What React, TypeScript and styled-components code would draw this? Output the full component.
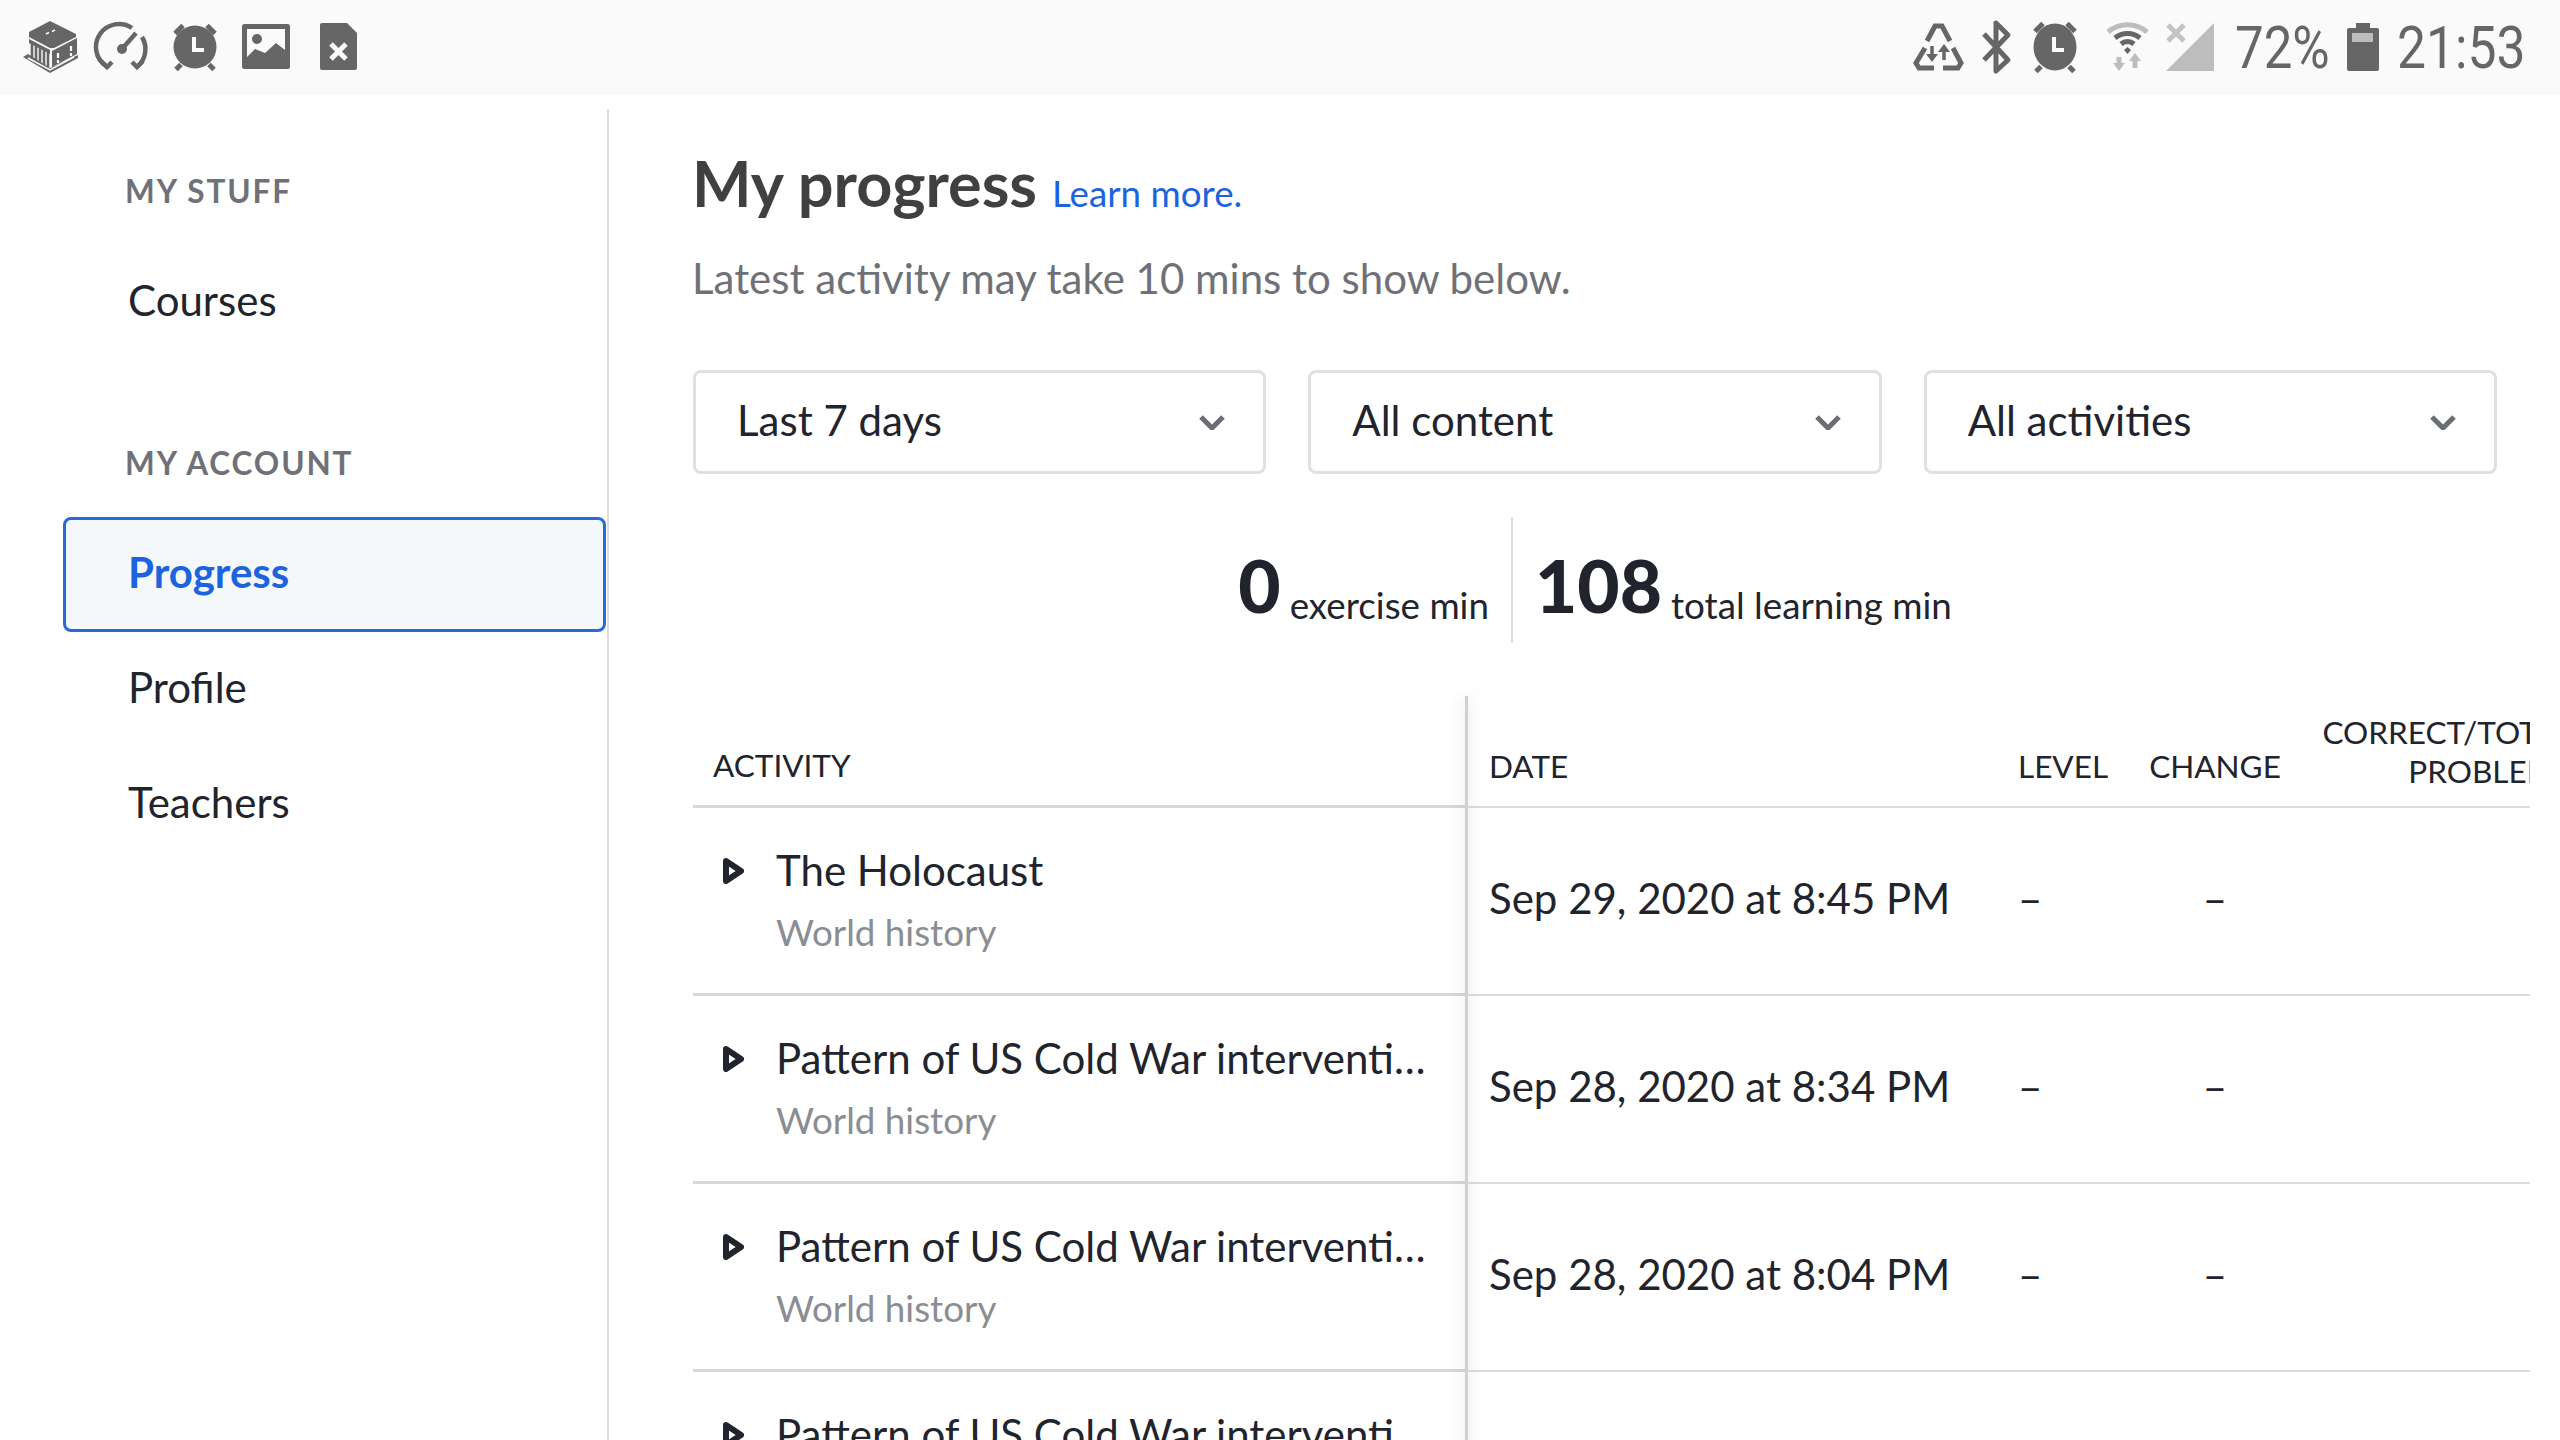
import React from 'react';
import styled, { createGlobalStyle } from 'styled-components';

const GRAY = '#666666';
const LIGHT = '#bdbdbd';
const BLUE = '#1c63e0';

const rows = [
  { title: 'The Holocaust', date: 'Sep 29, 2020 at 8:45 PM' },
  { title: 'Pattern of US Cold War intervention in Latin America', date: 'Sep 28, 2020 at 8:34 PM' },
  { title: 'Pattern of US Cold War intervention in Southeast Asia', date: 'Sep 28, 2020 at 8:04 PM' },
  { title: 'Pattern of US Cold War intervention in the Middle East', date: 'Sep 28, 2020 at 7:52 PM' },
];

function ChevronIcon() {
  return (
    <Chevron viewBox="0 0 26 15">
      <path d="M2 2 L13 13 L24 2" fill="none" stroke="#6b6d75" strokeWidth="5" />
    </Chevron>
  );
}

function PlayIcon() {
  return (
    <PlaySvg viewBox="0 0 22 26">
      <path d="M3 3 L18 13 L3 23 Z" fill="#fff" stroke="#21242c" strokeWidth="6" strokeLinejoin="round" />
    </PlaySvg>
  );
}

function AlarmIcon({ cx, rx, ry }: { cx: number; rx: number; ry: number }) {
  const top = 47 - ry;
  const bottom = 47 + ry;
  return (
    <g fill={GRAY}>
      <ellipse cx={cx} cy={47} rx={rx} ry={ry} />
      <path
        d={`M${cx - 20} ${top + 8} L${cx - 12} ${top} M${cx + 20} ${top + 8} L${cx + 12} ${top} M${cx - 19} ${bottom + 1} L${cx - 14} ${bottom - 4} M${cx + 19} ${bottom + 1} L${cx + 14} ${bottom - 4}`}
        stroke={GRAY}
        strokeWidth="5"
      />
      <path d={`M${cx - 1} 37 V50 H${cx + 9}`} fill="none" stroke="#fafafa" strokeWidth="4" />
    </g>
  );
}

function LeftIcons() {
  return (
    <>
      <SlotSvg viewBox="0 0 72 95">
        <path d="M36 21 L62 34 L62 37 L40 48 L36 48 L15 37 L15 32 Z" fill={GRAY} />
        <path d="M32 34 L35 32.5 M38 31.5 L41 30" stroke="#fafafa" strokeWidth="1.6" />
        <path d="M15 39 L36 50 L36 54 L15 43 Z" fill={GRAY} />
        <path d="M18 43 V60 M22 45 V62 M26 47 V64 M30 49 V66 M34 51 V67" stroke={GRAY} strokeWidth="2.6" />
        <path d="M38 51 L63 38 L63 54 L38 67 Z" fill={GRAY} />
        <path d="M44 53 V58 M44 60 V63 M57 46 V51 M57 53 V56" stroke="#fafafa" strokeWidth="2.2" />
        <path d="M9 57 L14 54 L36 68 L64 55 L64 58 L36 73 Z" fill={GRAY} />
        <path d="M14 58 L36 70 L60 57" fill="none" stroke="#fafafa" strokeWidth="1.5" />
      </SlotSvg>
      <SlotSvg viewBox="0 0 72 95">
        <g fill="none" stroke={GRAY} strokeWidth="4.5">
          <path d="M20 66 A23 23 0 0 1 46 28" />
          <path d="M56 37 A23 23 0 0 1 52 66" />
          <path d="M36 49 L50 33" />
          <path d="M15 61 L21 67 L26 62 M46 62 L51 67 L57 61" />
        </g>
        <circle cx="36" cy="49" r="5" fill={GRAY} />
      </SlotSvg>
      <SlotSvg viewBox="0 0 72 95">
        <AlarmIcon cx={37} rx={21.5} ry={21.5} />
      </SlotSvg>
      <SlotSvg viewBox="0 0 72 95">
        <rect x="12" y="24" width="48" height="45" rx="2.5" fill={GRAY} />
        <path d="M17 29 H55 V50 L46 43 L35 53 L25 49 L17 57 Z" fill="#fafafa" />
        <circle cx="27" cy="39" r="5" fill={GRAY} />
      </SlotSvg>
      <SlotSvg viewBox="0 0 72 95">
        <path d="M20 23 H45 L55 33 V68 Q55 70 53 70 H20 Q18 70 18 68 V25 Q18 23 20 23 Z" fill={GRAY} />
        <path d="M29 44 L44 59 M44 44 L29 59" stroke="#fafafa" strokeWidth="5" />
      </SlotSvg>
    </>
  );
}

function RightIcons() {
  return (
    <>
      <GlyphSvg $w={51} $left={0} viewBox="0 0 51 95">
        <g fill="none" stroke={GRAY} strokeWidth="5">
          <path d="M14 41 L22 26 H29 L37 41" />
          <path d="M12 48 L3 63 L6 68 H21" />
          <path d="M40 48 L48 63 L45 68 H30" />
        </g>
        <path d="M19 46 V58 M31 60 V48" stroke={GRAY} strokeWidth="3.5" />
        <path d="M13 54 L19 62 L25 54 Z M25 52 L31 44 L37 52 Z" fill={GRAY} />
      </GlyphSvg>
      <GlyphSvg $w={31} $left={17} viewBox="0 0 31 95">
        <path d="M3 34 L27 60 L15 71 V23 L27 35 L3 60" fill="none" stroke={GRAY} strokeWidth="5" strokeLinejoin="round" />
      </GlyphSvg>
      <GlyphSvg $w={48} $left={19} viewBox="0 0 48 95">
        <AlarmIcon cx={24} rx={21.5} ry={23.5} />
      </GlyphSvg>
      <GlyphSvg $w={43} $left={27} viewBox="0 0 43 95">
        <path d="M2 32 A30 30 0 0 1 41 32" fill="none" stroke={LIGHT} strokeWidth="5" />
        <path d="M9 38 A20 20 0 0 1 34 38 M15 44 A10 10 0 0 1 28 44" fill="none" stroke={GRAY} strokeWidth="5" />
        <path d="M18 50 L21.5 47 L25 50 L21.5 54 Z" fill={GRAY} />
        <path d="M13 57 V65 M29 68 V60" stroke={LIGHT} strokeWidth="5" />
        <path d="M7 63 L13 71 L19 63 Z M23 61 L29 53 L35 61 Z" fill={LIGHT} />
      </GlyphSvg>
      <GlyphSvg $w={49} $left={17} viewBox="0 0 49 95">
        <path d="M0 71 L48 23 V71 Z" fill={LIGHT} />
        <path d="M2 25 L18 41 M18 25 L2 41" stroke="#c4c4c4" strokeWidth="5" />
      </GlyphSvg>
      <Percent>72%</Percent>
      <GlyphSvg $w={32} $left={18} viewBox="0 0 32 95">
        <path d="M9 23 H23 V28 H30 Q32 28 32 30 V69 Q32 71 30 71 H2 Q0 71 0 69 V30 Q0 28 2 28 H9 Z" fill={GRAY} />
        <rect x="5" y="33" width="21" height="9" fill={LIGHT} />
      </GlyphSvg>
      <Clock>21:53</Clock>
    </>
  );
}

function App() {
  return (
    <Page>
      <GlobalStyle />
      <StatusBar>
        <StatusGroup>
          <LeftIcons />
        </StatusGroup>
        <StatusGroup>
          <RightIcons />
        </StatusGroup>
      </StatusBar>
      <Body>
        <Sidebar>
          <SectionLabel>MY STUFF</SectionLabel>
          <NavList>
            <NavItem>Courses</NavItem>
          </NavList>
          <SectionLabel $top={83}>MY ACCOUNT</SectionLabel>
          <NavList>
            <NavItem $active>Progress</NavItem>
            <NavItem>Profile</NavItem>
            <NavItem>Teachers</NavItem>
          </NavList>
        </Sidebar>
        <Main>
          <Heading>
            <Title>My progress</Title>
            <LearnMore href="#">Learn more.</LearnMore>
          </Heading>
          <Subtitle>Latest activity may take 10 mins to show below.</Subtitle>
          <Filters>
            {['Last 7 days', 'All content', 'All activities'].map((label) => (
              <Filter key={label}>
                {label}
                <ChevronIcon />
              </Filter>
            ))}
          </Filters>
          <Stats>
            <Stat>
              <StatNumber>0</StatNumber>
              <StatLabel>exercise min</StatLabel>
            </Stat>
            <StatDivider />
            <Stat>
              <StatNumber>108</StatNumber>
              <StatLabel>total learning min</StatLabel>
            </Stat>
          </Stats>
          <TableClip>
            <Table>
              <thead>
                <tr>
                  <HeadFrozen>ACTIVITY</HeadFrozen>
                  <HeadCell $width={529}>DATE</HeadCell>
                  <HeadCell $width={120}>LEVEL</HeadCell>
                  <HeadCell $width={175} $align="center">
                    CHANGE
                  </HeadCell>
                  <HeadCell $width={281} $align="right" $bottom={15}>
                    CORRECT/TOTAL
                    <br />
                    PROBLEMS
                  </HeadCell>
                </tr>
              </thead>
              <tbody>
                {rows.map((row) => (
                  <tr key={row.date}>
                    <FrozenCell>
                      <ActivityWrap>
                        <PlayIcon />
                        <ActivityText>
                          <ActivityTitle>{row.title}</ActivityTitle>
                          <ActivitySubject>World history</ActivitySubject>
                        </ActivityText>
                      </ActivityWrap>
                    </FrozenCell>
                    <Cell>{row.date}</Cell>
                    <Cell>–</Cell>
                    <Cell $align="center">–</Cell>
                    <Cell />
                  </tr>
                ))}
              </tbody>
            </Table>
          </TableClip>
        </Main>
      </Body>
    </Page>
  );
}

export default App;

const GlobalStyle = createGlobalStyle`
  html, body {
    margin: 0;
    padding: 0;
    background: #fff;
    overflow: hidden;
  }
  * {
    box-sizing: border-box;
  }
`;

const Page = styled.div`
  width: 2560px;
  height: 1440px;
  display: flex;
  flex-direction: column;
  overflow: hidden;
  font-family: Lato, 'Noto Sans', sans-serif;
  color: #21242c;
`;

const StatusBar = styled.div`
  flex: 0 0 95px;
  display: flex;
  align-items: center;
  justify-content: space-between;
  padding: 0 33px 0 14px;
  background: #fafafa;
`;

const StatusGroup = styled.div`
  display: flex;
  align-items: center;
  height: 95px;
`;

const SlotSvg = styled.svg`
  width: 72px;
  height: 95px;
  display: block;
`;

const GlyphSvg = styled.svg<{ $w: number; $left: number }>`
  width: ${(p) => p.$w}px;
  height: 95px;
  margin-left: ${(p) => p.$left}px;
  display: block;
`;

const Percent = styled.span`
  width: 94px;
  margin-left: 20px;
  font-family: Roboto, sans-serif;
  font-weight: 400;
  font-size: 60px;
  line-height: 95px;
  color: ${GRAY};
  white-space: nowrap;
  transform: scaleX(0.85);
  transform-origin: left center;
`;

const Clock = styled(Percent)`
  width: 130px;
  margin-left: 18px;
  transform: scaleX(0.86);
`;

const Body = styled.div`
  flex: 1;
  display: flex;
  min-height: 0;
  margin-top: 14px;
`;

const Sidebar = styled.aside`
  flex: 0 0 609px;
  padding: 62px 1px 0 63px;
  border-right: 2px solid #dddddd;
`;

const SectionLabel = styled.div<{ $top?: number }>`
  margin-top: ${(p) => p.$top ?? 0}px;
  padding-left: 62px;
  font-size: 31.5px;
  line-height: 40px;
  font-weight: 700;
  letter-spacing: 1.9px;
  color: #6f7177;
`;

const NavList = styled.div`
  display: flex;
  flex-direction: column;
  margin-top: 34px;
`;

const NavItem = styled.div<{ $active?: boolean }>`
  height: 115px;
  display: flex;
  align-items: center;
  padding: 0 0 6px 62px;
  border: 3px solid ${(p) => (p.$active ? '#2a6ad8' : 'transparent')};
  border-radius: 8px;
  background: ${(p) => (p.$active ? '#f5f8fb' : 'transparent')};
  color: ${(p) => (p.$active ? BLUE : '#21242c')};
  font-size: 42px;
  font-weight: ${(p) => (p.$active ? 700 : 400)};
`;

const Main = styled.main`
  flex: 1;
  min-width: 0;
  padding: 36px 63px 0 84px;
`;

const Heading = styled.div`
  display: flex;
  align-items: baseline;
  gap: 15px;
  height: 76px;
  margin-left: -1px;
`;

const Title = styled.h1`
  margin: 0;
  font-size: 63px;
  line-height: 76px;
  font-weight: 700;
  color: #3f4042;
`;

const LearnMore = styled.a`
  font-size: 36.75px;
  color: ${BLUE};
  text-decoration: none;
`;

const Subtitle = styled.p`
  margin: 31px 0 0 -1px;
  font-size: 42px;
  line-height: 52px;
  color: #6f7177;
`;

const Filters = styled.div`
  display: grid;
  grid-template-columns: repeat(3, 1fr);
  gap: 42px;
  margin-top: 66px;
`;

const Filter = styled.div`
  height: 104px;
  display: flex;
  align-items: center;
  justify-content: space-between;
  padding: 0 38px 4px 41px;
  border: 3px solid #dfe0e2;
  border-radius: 8px;
  font-size: 42px;
`;

const Chevron = styled.svg`
  width: 26px;
  height: 15px;
  margin-top: 4px;
  display: block;
`;

const Stats = styled.div`
  display: flex;
  justify-content: center;
  height: 126px;
  margin-top: 43px;
`;

const Stat = styled.div`
  display: flex;
  align-items: flex-end;
  gap: 9px;
  padding-bottom: 16px;
`;

const StatNumber = styled.span`
  margin-bottom: 6px;
  font-size: 73px;
  line-height: 72px;
  font-weight: 900;
`;

const StatLabel = styled.span`
  font-size: 36.75px;
  line-height: 44px;
`;

const StatDivider = styled.div`
  width: 2px;
  margin: 0 22px;
  background: #dddddd;
`;

// the frozen first column's edge lies over the scrolling rows
const TableClip = styled.div`
  position: relative;
  width: 1837px;
  margin-top: 41px;
  padding-top: 12px;
  overflow: hidden;

  &::after {
    content: '';
    position: absolute;
    top: 12px;
    bottom: 0;
    left: 772px;
    width: 3px;
    background: #cfd0d2;
    box-shadow: 0 0 16px rgba(0, 0, 0, 0.22);
  }
`;

const Table = styled.table`
  width: 1880px;
  table-layout: fixed;
  border-collapse: separate;
  border-spacing: 0;
`;

const HeadCell = styled.th<{ $width?: number; $align?: string; $bottom?: number }>`
  width: ${(p) => p.$width}px;
  height: 112px;
  padding: 0 0 ${(p) => p.$bottom ?? 20}px 21px;
  vertical-align: bottom;
  text-align: ${(p) => p.$align ?? 'left'};
  font-size: 31.5px;
  line-height: 39px;
  font-weight: 400;
  white-space: nowrap;
  border-bottom: 2px solid #dcdddf;
`;

const HeadFrozen = styled(HeadCell)`
  width: 775px;
  padding-left: 20px;
  border-bottom: 3px solid #d6d8da;
`;

const Cell = styled.td<{ $align?: string }>`
  height: 188px;
  padding: 0 0 7px 21px;
  text-align: ${(p) => p.$align ?? 'left'};
  font-size: 42px;
  white-space: nowrap;
  border-bottom: 2px solid #dcdddf;
`;

const FrozenCell = styled.td`
  height: 188px;
  padding: 0 0 0 30px;
  border-bottom: 3px solid #d6d8da;
`;

const ActivityWrap = styled.div`
  display: flex;
  align-items: flex-start;
  gap: 31px;
`;

const PlaySvg = styled.svg`
  flex: 0 0 22px;
  width: 22px;
  height: 26px;
  margin-top: 13px;
`;

const ActivityText = styled.div`
  display: flex;
  flex-direction: column;
  gap: 12px;
  min-width: 0;
  width: 650px;
`;

const ActivityTitle = styled.div`
  font-size: 42px;
  line-height: 50px;
  white-space: nowrap;
  overflow: hidden;
  text-overflow: ellipsis;
`;

const ActivitySubject = styled.div`
  font-size: 36.75px;
  line-height: 50px;
  color: #8a8d92;
`;
